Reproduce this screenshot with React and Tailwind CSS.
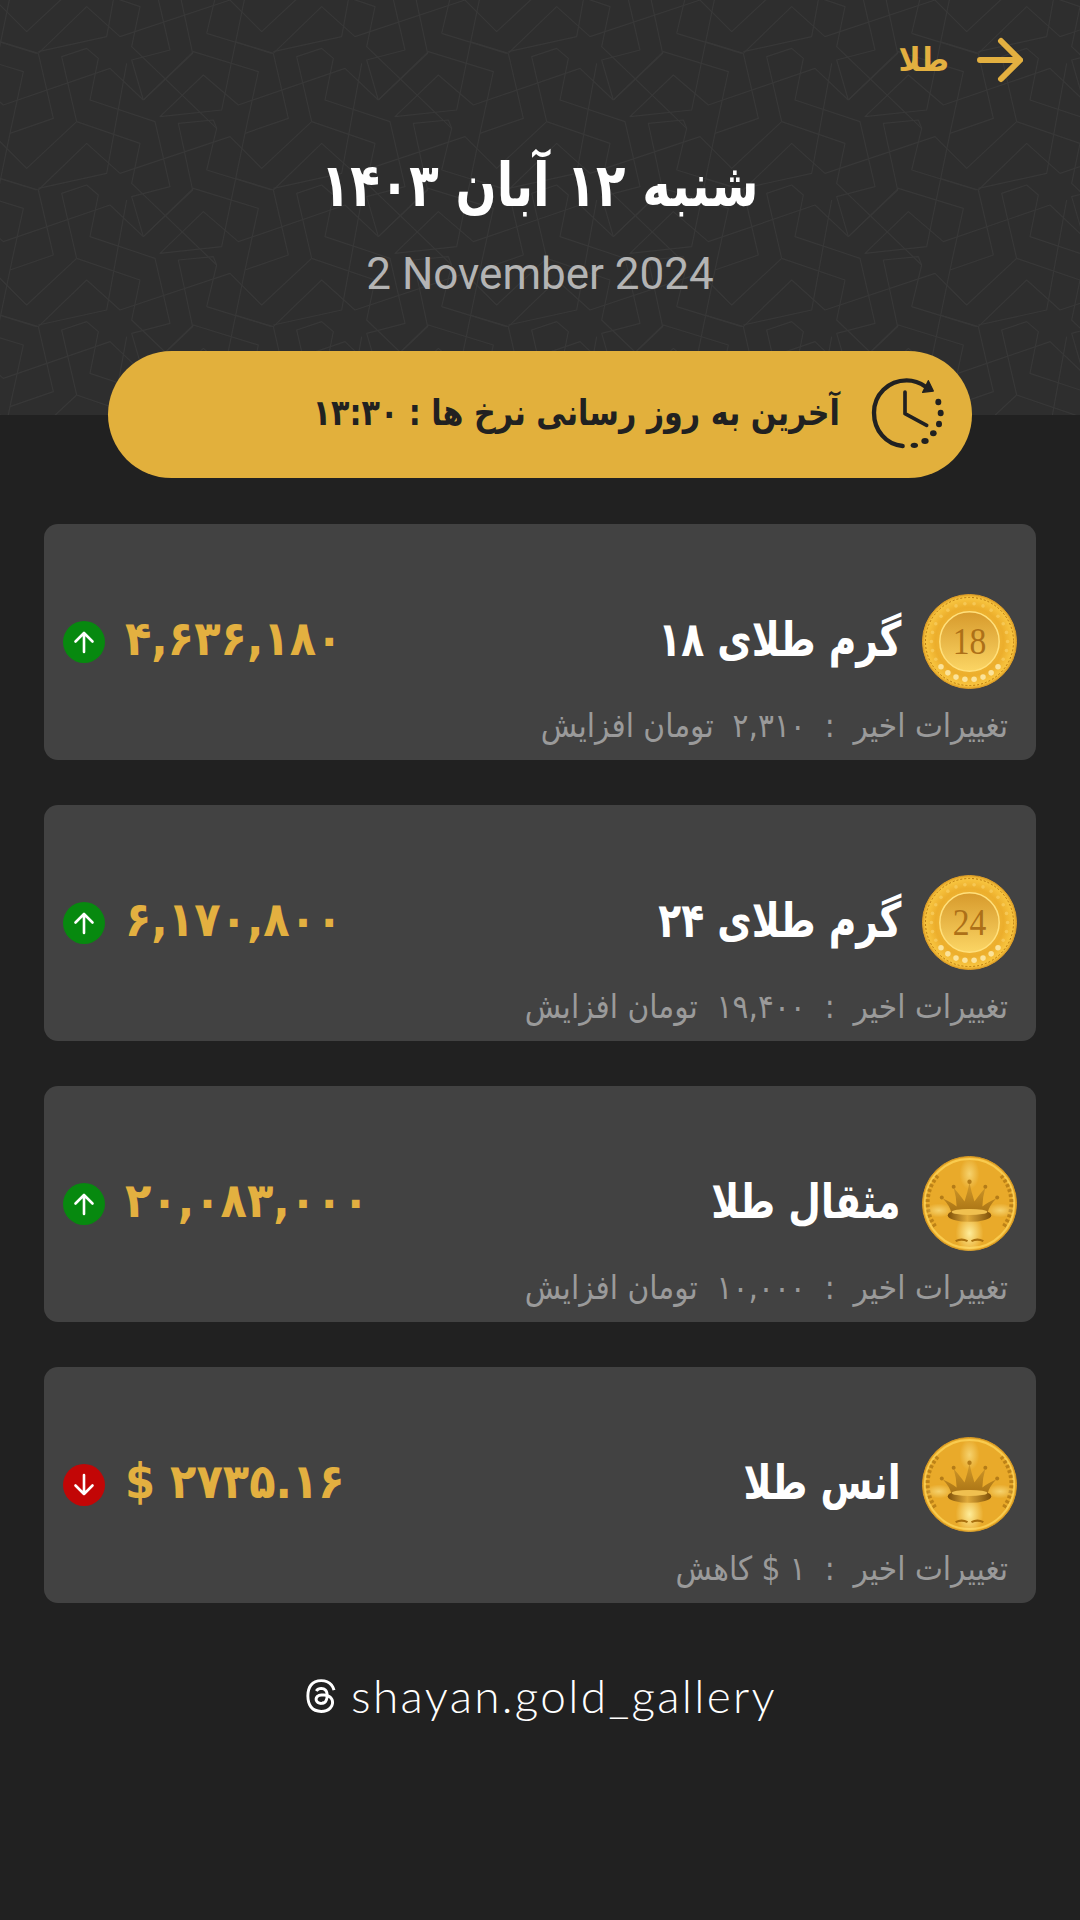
import React from "react";
import { FaThreads } from "react-icons/fa6";

const AR = { fontFamily: '"DejaVu Sans Condensed", "DejaVu Sans", sans-serif' };

const LINES = [
  "230,365 185,170 260,145 295,175 270,300 465,365 510,560 395,590 430,710",
  "430,300 580,155 775,215 735,400 665,740 480,760 610,635 715,725 1035,615 1135,710",
  "115,160 160,355 30,400",
  "115,160 260,20 360,110 690,0 785,95 935,-45",
  "380,190 320,520 115,565",
  "0,125 115,160",
  "620,100 815,160",
  "620,100 650,-25 640,-50 535,-40 578,160 430,300",
  "230,365 420,430 395,550 650,795",
];
const OFFSETS = [];
for (let i = -2; i <= 4; i++) for (let j = -2; j <= 3; j++) OFFSETS.push([i * 705, j * 410]);

function Pattern() {
  return (
    <svg className="absolute inset-0 w-full h-full" viewBox="0 0 3240 1245" aria-hidden="true">
      <g fill="none" stroke="#383838" strokeWidth="3.5" strokeLinejoin="round">
        {OFFSETS.map(([x, y], k) => (
          <g key={k} transform={`translate(${x} ${y})`}>
            {LINES.map((p, n) => <polyline key={n} points={p} />)}
          </g>
        ))}
      </g>
    </svg>
  );
}

function ClockIcon() {
  return (
    <svg width="75" height="75" viewBox="30 55 225 225" fill="none" stroke="#212121" strokeWidth="13" strokeLinecap="round" strokeLinejoin="round">
      <path d="M128 262 C78 258 42 215 42 162 C42 108 85 65 140 65 C160 65 180 72 197 84" />
      <path d="M205 66 L220 97 L188 101 Z" fill="#212121" strokeWidth="4" />
      <path d="M135 100 L135 165 L200 200" strokeWidth="11" />
      <g fill="#212121" stroke="none">
        <ellipse cx="235" cy="130" rx="9" ry="10" />
        <ellipse cx="242" cy="163" rx="9" ry="10" />
        <ellipse cx="237" cy="196" rx="9" ry="10" />
        <ellipse cx="220" cy="224" rx="10" ry="9" />
        <ellipse cx="195" cy="247" rx="11" ry="9" />
        <ellipse cx="163" cy="260" rx="11" ry="8" />
      </g>
    </svg>
  );
}

function Defs() {
  return (
    <svg width="0" height="0" className="absolute" aria-hidden="true">
      <defs>
        <radialGradient id="coinOuter" cx="50%" cy="50%" r="52%">
          <stop offset="0%" stopColor="#f7c94f" />
          <stop offset="70%" stopColor="#ecae2c" />
          <stop offset="90%" stopColor="#f8c540" />
          <stop offset="100%" stopColor="#d28c14" />
        </radialGradient>
        <linearGradient id="coinInner" x1="0" y1="0" x2="0" y2="1">
          <stop offset="0%" stopColor="#d79a2c" />
          <stop offset="100%" stopColor="#fbd564" />
        </linearGradient>
        <linearGradient id="crownFill" x1="0" y1="0" x2="0" y2="1">
          <stop offset="0%" stopColor="#d29a2a" />
          <stop offset="100%" stopColor="#a87214" />
        </linearGradient>
        <linearGradient id="crownBand" x1="0" y1="0" x2="1" y2="0">
          <stop offset="0%" stopColor="#7d4f08" />
          <stop offset="45%" stopColor="#e0aa3a" />
          <stop offset="100%" stopColor="#7d4f08" />
        </linearGradient>
        <radialGradient id="glow" cx="50%" cy="50%" r="50%">
          <stop offset="0%" stopColor="#fff0a0" stopOpacity="0.95" />
          <stop offset="100%" stopColor="#fff0a0" stopOpacity="0" />
        </radialGradient>
      </defs>
    </svg>
  );
}

function Stars() {
  const items = [];
  for (let i = 0; i < 26; i++) {
    const a = (i / 26) * Math.PI * 2;
    const low = Math.sin(a) > 0.6;
    items.push(
      <circle key={i} cx={48 + Math.cos(a) * 38.5} cy={48 + Math.sin(a) * 38.5} r={low ? 2.8 : 1.8} fill={low ? "#fbe39a" : "#f7cc5c"} opacity={low ? 1 : 0.8} />
    );
  }
  return <g>{items}</g>;
}

function NumberCoin({ n }) {
  return (
    <svg width="95" height="95" viewBox="0 0 96 96" className="shrink-0 mx-[1px]">
      <circle cx="48" cy="48" r="47.5" fill="url(#coinOuter)" stroke="#e0a028" />
      <circle cx="48" cy="48" r="44.5" fill="none" stroke="#b8780f" strokeWidth="1" strokeDasharray="2 2" />
      <Stars />
      <circle cx="48" cy="48" r="30" fill="url(#coinInner)" stroke="#ffe07c" strokeWidth="1.5" />
      <text x="48" y="61" textAnchor="middle" fontFamily='"Liberation Serif", serif' fontSize="38" textLength="34" lengthAdjust="spacingAndGlyphs" fill="#ad7018">{n}</text>
    </svg>
  );
}

function CrownCoin() {
  return (
    <svg width="95" height="95" viewBox="0 0 96 96" className="shrink-0 mx-[1px]">
      <circle cx="48" cy="48" r="47.5" fill="#e9aa2a" stroke="#d89a22" />
      <circle cx="48" cy="48" r="45" fill="none" stroke="#f9cb4e" strokeWidth="2" />
      <path d="M16 20 A41 41 0 0 0 14 72 M80 20 A41 41 0 0 1 82 72" fill="none" stroke="#a9700f" strokeWidth="4" strokeDasharray="3 2.2" opacity="0.7" />
      <ellipse cx="48" cy="78" rx="14" ry="20" fill="url(#glow)" />
      <ellipse cx="48" cy="18" rx="10" ry="16" fill="url(#glow)" opacity="0.6" />
      <ellipse cx="17" cy="55" rx="14" ry="7" fill="url(#glow)" opacity="0.6" />
      <ellipse cx="79" cy="55" rx="14" ry="7" fill="url(#glow)" opacity="0.6" />
      <path d="M30 58 Q28 50 21 43 Q30 47 35 51 Q35 42 32 32 Q39 40 43 46 Q46 37 48 27 Q50 37 53 46 Q57 40 64 32 Q61 42 61 51 Q66 47 75 43 Q68 50 66 58 Z" fill="url(#crownFill)" />
      <ellipse cx="48" cy="60" rx="22" ry="6.5" fill="url(#crownBand)" />
      <ellipse cx="48" cy="56.5" rx="18" ry="3" fill="#f0c050" />
      <g fill="#b47c18">
        <circle cx="20" cy="42" r="2" /><circle cx="32" cy="31" r="2" /><circle cx="48" cy="26" r="2.2" /><circle cx="64" cy="31" r="2" /><circle cx="76" cy="42" r="2" />
      </g>
      <path d="M34 86 Q40 83 46 86 M50 86 Q56 83 62 86" fill="none" stroke="#a9700f" strokeWidth="2.2" />
    </svg>
  );
}

function Arrow({ up }) {
  return (
    <div className={`w-[42px] h-[42px] rounded-full flex items-center justify-center shrink-0 ${up ? "bg-[#07890f]" : "bg-[#c20606]"}`}>
      <svg width="26" height="26" viewBox="0 0 26 26" fill="none" stroke="#fff" strokeWidth="2.6" strokeLinecap="round" strokeLinejoin="round" className={up ? "" : "rotate-180"}>
        <path d="M13 23 L13 4 M4.5 12.5 L13 4 L21.5 12.5" />
      </svg>
    </div>
  );
}

const rows = [
  { coin: <NumberCoin n="18" />, title: "گرم طلای ۱۸", price: "۴,۶۳۶,۱۸۰", up: true, sub: "تغییرات اخیر  :  ۲,۳۱۰  تومان افزایش" },
  { coin: <NumberCoin n="24" />, title: "گرم طلای ۲۴", price: "۶,۱۷۰,۸۰۰", up: true, sub: "تغییرات اخیر  :  ۱۹,۴۰۰  تومان افزایش" },
  { coin: <CrownCoin />, title: "مثقال طلا", price: "۲۰,۰۸۳,۰۰۰", up: true, sub: "تغییرات اخیر  :  ۱۰,۰۰۰  تومان افزایش" },
  { coin: <CrownCoin />, title: "انس طلا", price: "$ ۲۷۳۵.۱۶", up: false, sub: "تغییرات اخیر  :  ۱ $ کاهش" },
];

function Card({ row }) {
  return (
    <div className="h-[236px] rounded-[14px] bg-[#424242] pt-[69px] pl-[19px] pr-[18px] flex flex-col">
      <div className="flex items-center justify-between h-[97px]">
        <div className="flex items-center gap-[20px]">
          <Arrow up={row.up} />
          <span dir="ltr" className="text-[#e3b040] text-[48px] font-bold leading-none -mt-[8px]" style={AR}>{row.price}</span>
        </div>
        <div className="flex items-center gap-[20px]">
          <span dir="rtl" className="text-white text-[48px] font-bold leading-none -mt-[6px] origin-right scale-x-[0.87]" style={AR}>{row.title}</span>
          {row.coin}
        </div>
      </div>
      <div dir="rtl" className="mt-[16px] pr-[10px] text-[#9a9a9a] text-[33px] leading-[40px] whitespace-pre" style={AR}>{row.sub}</div>
    </div>
  );
}

export default function App() {
  return (
    <div className="w-[1080px] h-[1920px] bg-[#212121] overflow-hidden">
      <Defs />
      <header className="relative h-[415px] bg-[#2e2e2e]">
        <Pattern />
        <div className="relative flex flex-col items-center">
          <div className="w-full h-[120px] flex items-center justify-end gap-[28px] pr-[57px] text-[#e3b040]">
            <span dir="rtl" className="text-[33px] font-bold" style={AR}>طلا</span>
            <svg width="46" height="46" viewBox="0 0 46 46" fill="none" stroke="#e3b040" strokeWidth="6" strokeLinecap="round" strokeLinejoin="miter">
              <path d="M3 23 L42 23 M24 4 L43 23 L24 42" />
            </svg>
          </div>
          <h1 dir="rtl" className="text-white text-[60px] font-bold leading-[70px] mt-[30px] scale-x-[0.895]" style={AR}>شنبه ۱۲ آبان ۱۴۰۳</h1>
          <p className="text-[#b4b4b4] text-[44px] leading-[48px] mt-[30px]" style={{ fontFamily: "Roboto, sans-serif" }}>2 November 2024</p>
        </div>
      </header>
      <div className="relative -mt-[64px] mx-[108px] h-[127px] rounded-[64px] bg-[#e2b03c] flex items-center justify-end pr-[27px] gap-[30px]">
        <span dir="rtl" className="text-[#212121] text-[36px] font-bold -mt-[4px] origin-right scale-x-[0.93]" style={AR}>آخرین به روز رسانی نرخ ها : ۱۳:۳۰</span>
        <ClockIcon />
      </div>
      <main className="mx-[44px] mt-[46px] flex flex-col gap-[45px]">
        {rows.map((r, i) => <Card key={i} row={r} />)}
      </main>
      <footer className="mt-[63px] flex items-center justify-center gap-[12px] text-white">
        <FaThreads size={36} />
        <span className="text-[46px] font-light leading-[60px] tracking-[2.3px]" style={{ fontFamily: "Lato, sans-serif" }}>shayan.gold_gallery</span>
      </footer>
    </div>
  );
}
